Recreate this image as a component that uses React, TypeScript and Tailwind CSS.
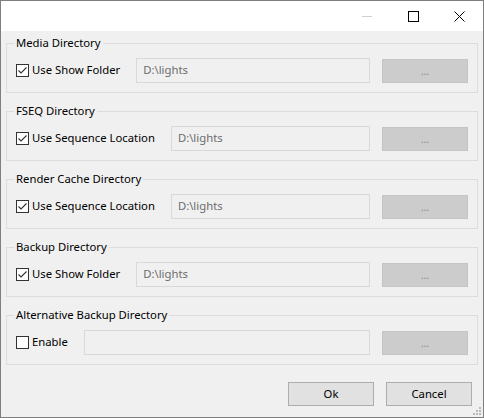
const font = { fontFamily: '"Noto Sans", "Open Sans", Arial, sans-serif' };

const Checkbox = ({ checked }: { checked: boolean }) => (
  <span className="w-[13px] h-[13px] shrink-0 border border-[#333333] bg-white flex items-center justify-center">
    {checked && (
      <svg width="11" height="11" viewBox="0 0 11 11">
        <path d="M1.5 5.5 L4 8 L9.5 2.5" fill="none" stroke="#333333" strokeWidth="1.1" />
      </svg>
    )}
  </span>
);

type Group = { title: string; label: string; checked: boolean; path: string };

const groups: Group[] = [
  { title: "Media Directory", label: "Use Show Folder", checked: true, path: "D:\\lights" },
  { title: "FSEQ Directory", label: "Use Sequence Location", checked: true, path: "D:\\lights" },
  { title: "Render Cache Directory", label: "Use Sequence Location", checked: true, path: "D:\\lights" },
  { title: "Backup Directory", label: "Use Show Folder", checked: true, path: "D:\\lights" },
  { title: "Alternative Backup Directory", label: "Enable", checked: false, path: "" },
];

const DirGroup = ({ title, label, checked, path }: Group) => (
  <fieldset className="border border-[#dcdcdc] px-[9px] pt-[7px] pb-[9px] min-w-0">
    <legend className="text-[11.3px] leading-[16px] text-black -ml-[2px] px-[2px]">{title}</legend>
    <div className="flex items-center h-[25px]">
      <Checkbox checked={checked} />
      <span className="ml-[3px] text-[11.3px] text-black whitespace-nowrap">{label}</span>
      <div className="ml-4 flex-1 h-[25px] border border-[#d9d9d9] bg-[#f0f0f0] px-[6px] flex items-center text-[11.3px] text-[#6d6d6d] leading-none pb-[2px]">
        {path}
      </div>
      <div className="ml-[12px] w-[86px] h-[24px] bg-[#cccccc] border border-[#c4c4c4] flex items-center justify-center text-[10px] text-[#8a8a8a] pt-[2px]">
        ...
      </div>
    </div>
  </fieldset>
);

export default function App() {
  return (
    <div
      className="w-[484px] h-[418px] border border-[#7f7f7f] bg-[#f0f0f0] flex flex-col overflow-hidden relative"
      style={font}
    >
      <div className="h-[30px] bg-white flex items-center justify-end shrink-0">
        <div className="w-[46px] h-[30px] flex items-center justify-center">
          <svg width="10" height="10" viewBox="0 0 10 10">
            <line x1="0" y1="5.5" x2="10" y2="5.5" stroke="#cfcfcf" strokeWidth="1" />
          </svg>
        </div>
        <div className="w-[46px] h-[30px] flex items-center justify-center">
          <svg width="11" height="11" viewBox="0 0 11 11">
            <rect x="0.5" y="0.5" width="10" height="10" fill="none" stroke="#000" strokeWidth="1" />
          </svg>
        </div>
        <div className="w-[46px] h-[30px] flex items-center justify-center mr-[1px]">
          <svg width="11" height="11" viewBox="0 0 11 11">
            <path d="M0.5 0.5 L10.5 10.5 M10.5 0.5 L0.5 10.5" stroke="#000" strokeWidth="1" />
          </svg>
        </div>
      </div>
      <div className="flex-1 px-[5px] pt-[4px] flex flex-col gap-[10px]">
        {groups.map((g) => (
          <DirGroup key={g.title} {...g} />
        ))}
        <div className="flex justify-end gap-[12px] pr-[6px] mt-[7px]">
          <button className="w-[86px] h-[24px] bg-[#e1e1e1] border border-[#adadad] text-[11.3px] text-black">
            Ok
          </button>
          <button className="w-[86px] h-[24px] bg-[#e1e1e1] border border-[#adadad] text-[11.3px] text-black">
            Cancel
          </button>
        </div>
      </div>
      <svg className="absolute right-[2px] bottom-[2px]" width="9" height="9" viewBox="0 0 9 9">
        <rect x="7" y="1" width="2" height="2" fill="#b8b8b8" />
        <rect x="4" y="4" width="2" height="2" fill="#b8b8b8" />
        <rect x="7" y="4" width="2" height="2" fill="#b8b8b8" />
        <rect x="1" y="7" width="2" height="2" fill="#b8b8b8" />
        <rect x="4" y="7" width="2" height="2" fill="#b8b8b8" />
        <rect x="7" y="7" width="2" height="2" fill="#b8b8b8" />
      </svg>
    </div>
  );
}
